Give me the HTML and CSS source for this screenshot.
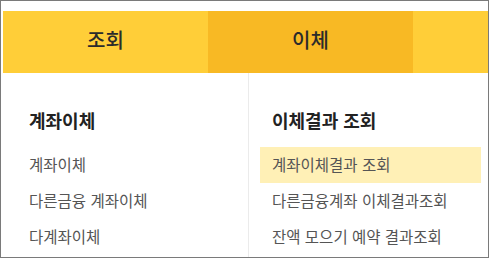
FILE: index.html
```html
<!DOCTYPE html>
<html lang="ko">
<head>
<meta charset="utf-8">
<link rel="stylesheet" href="styles.css">
</head>
<body>
<div class="frame">
  <nav class="tabs">
    <div class="tab">조회</div>
    <div class="tab active">이체</div>
    <div class="tab">공과금</div>
  </nav>
  <div class="panel">
    <section class="col col-left">
      <h3 class="col-title">계좌이체</h3>
      <ul class="menu">
        <li class="menu-item">계좌이체</li>
        <li class="menu-item">다른금융 계좌이체</li>
        <li class="menu-item">다계좌이체</li>
      </ul>
    </section>
    <section class="col col-right">
      <h3 class="col-title">이체결과 조회</h3>
      <ul class="menu">
        <li class="menu-item hover">계좌이체결과 조회</li>
        <li class="menu-item">다른금융계좌 이체결과조회</li>
        <li class="menu-item">잔액 모으기 예약 결과조회</li>
      </ul>
    </section>
  </div>
</div>
</body>
</html>
```

FILE: styles.css
```css
* { box-sizing: border-box; }
html, body { margin: 0; padding: 0; background: #fff; }
body { font-family: "Noto Sans CJK KR", "Noto Sans", sans-serif; }

.frame {
  width: 489px;
  height: 258px;
  border: 1px solid #7a7a7a;
  padding: 10px 0 0 2px;
  overflow: hidden;
  background: #fff;
}

.tabs {
  display: flex;
  height: 62px;
  overflow: hidden;
}
.tab {
  flex: none;
  width: 205px;
  display: flex;
  align-items: center;
  justify-content: center;
  font-size: 20px;
  font-weight: 500;
  color: #2b2b2b;
  background: #ffce38;
  padding-bottom: 5px;
  white-space: nowrap;
}
.tab.active { background: #f8b924; }

.panel {
  display: flex;
  height: 184px;
}
.col {
  padding-top: 34px;
}
.col-left {
  width: 246px;
  flex: none;
  padding-left: 14px;
  border-right: 1px solid #ebebeb;
}
.col-right {
  flex: 1;
  padding-left: 11px;
  padding-right: 7px;
}
.col-title {
  margin: 0;
  padding-left: 12px;
  font-size: 18px;
  font-weight: 700;
  line-height: 26px;
  color: #222;
}
.menu {
  list-style: none;
  margin: 14px 0 0;
  padding: 0;
}
.menu-item {
  height: 36px;
  line-height: 34px;
  padding-left: 12px;
  font-size: 15.5px;
  color: #555;
  white-space: nowrap;
}
.menu-item.hover { background: #fff0b6; }
```
